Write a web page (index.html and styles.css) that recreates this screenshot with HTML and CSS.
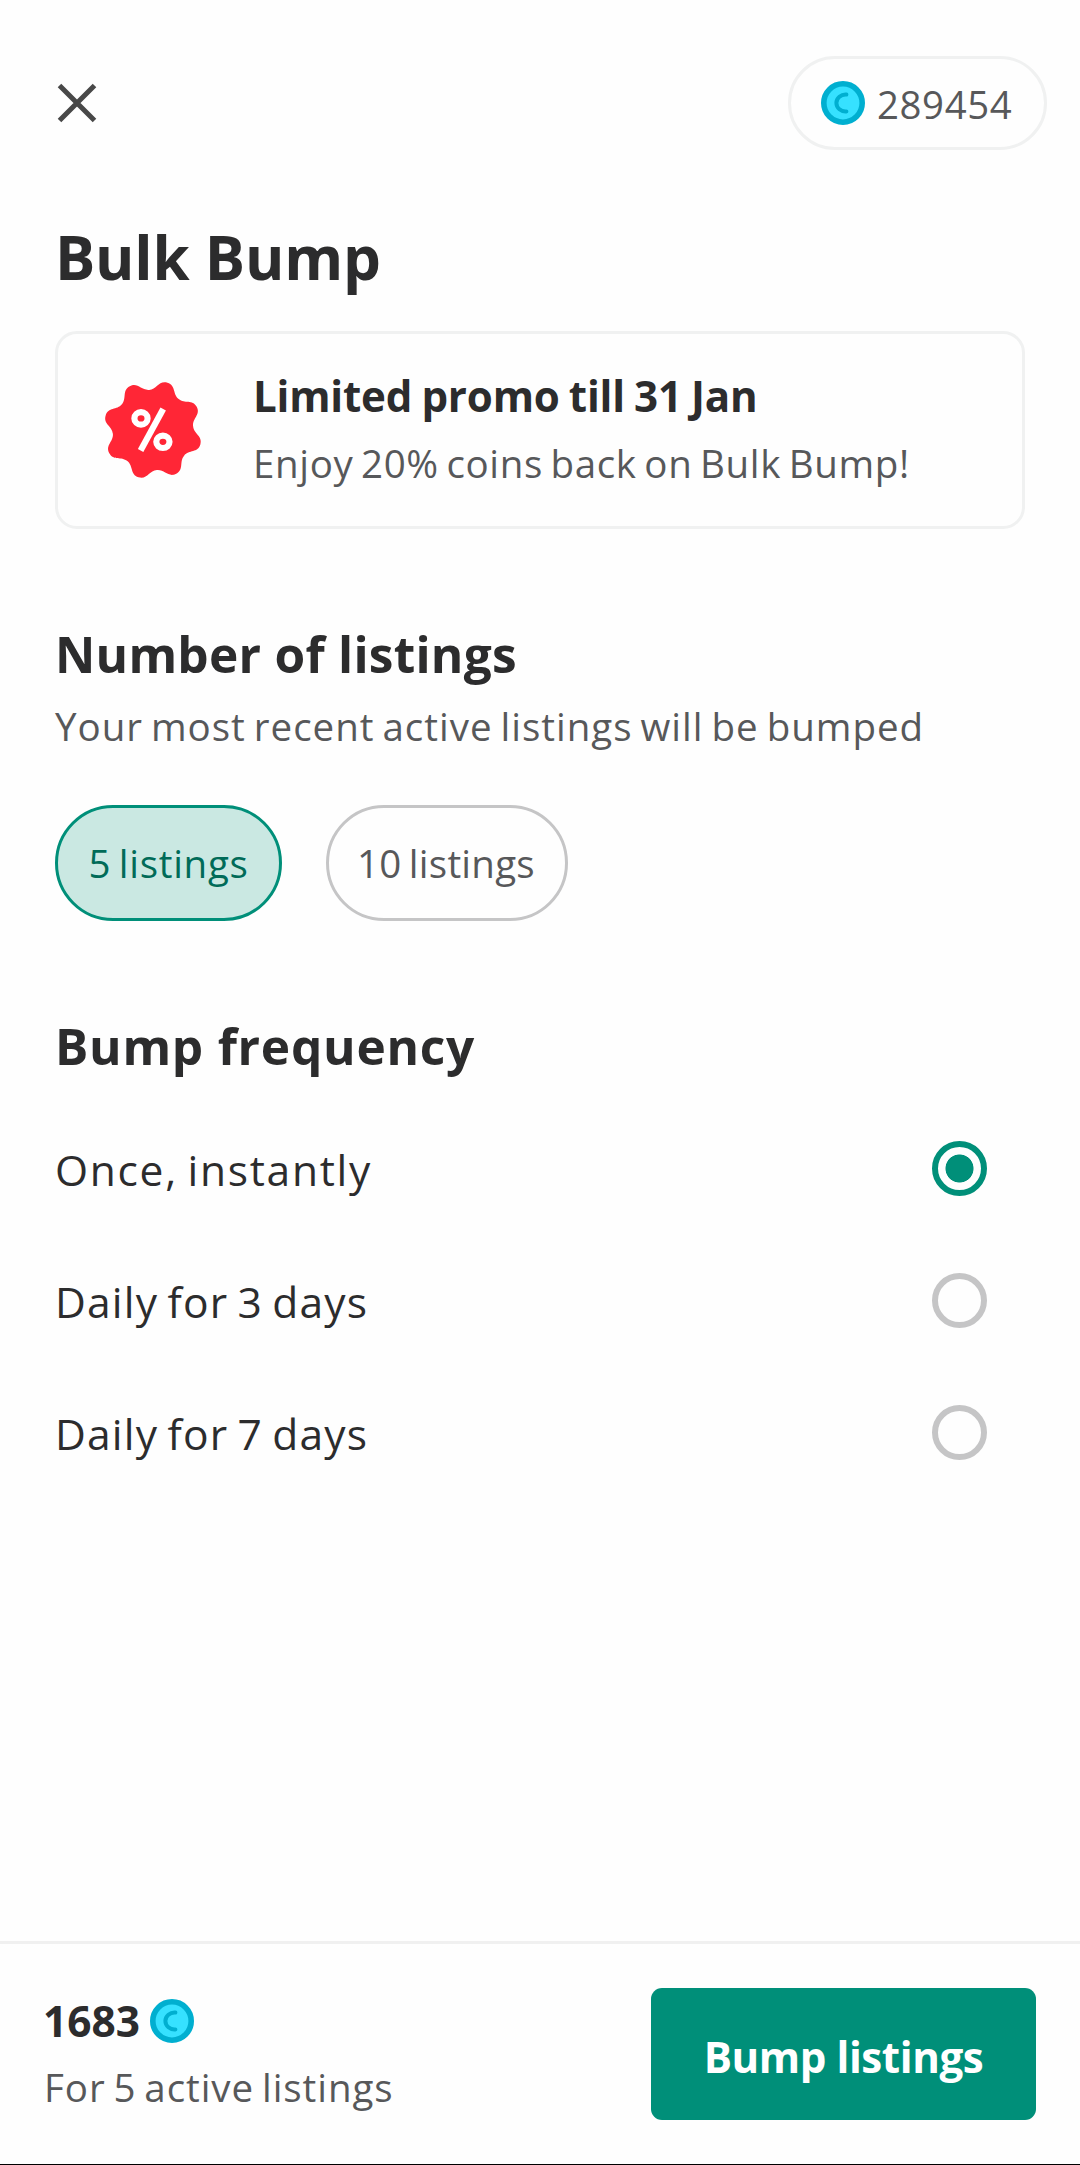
FILE: index.html
```
<!DOCTYPE html>
<html lang="en">
<head>
    <meta charset="UTF-8">
    <meta name="viewport" content="width=device-width, initial-scale=1.0">
    <title>Bulk Bump</title>

    <link rel="stylesheet" href="styles.css">
</head>
<body>
    <header class="header">
        <button class="close" aria-label="Close">
            <svg width="40" height="40" viewBox="0 0 40 40"><path d="M2.5 2.5l35 35M37.5 2.5l-35 35" fill="none" stroke="#484848" stroke-width="5"/></svg>
        </button>
        <div class="balance">
            <svg class="coin" viewBox="0 0 44 44"><circle cx="22" cy="22" r="19.2" fill="#36e1ff" stroke="#00afd0" stroke-width="5.6"/><path d="M25.4 13.6C20 13.2 15.4 17 15.4 22s4.6 8.8 10 8.4" fill="none" stroke="#00afd0" stroke-width="4" stroke-linecap="round"/></svg>
            <span>289454</span>
        </div>
    </header>

    <main class="content">
        <h1 class="title">Bulk Bump</h1>

        <div class="promo">
            <svg class="badge" viewBox="-50 -50 100 100">
                <path fill="#ff2636" d="M-3.86-40.11C4.1-40.88 5.86-49.97 14.47-47.34C23.08-44.71 19.46-36.19 25.63-31.1C31.8-26.01 39.47-31.19 43.7-23.24C47.93-15.29 39.34-11.82 40.11-3.86C40.88 4.1 49.97 5.86 47.34 14.47C44.71 23.08 36.19 19.46 31.1 25.63C26.01 31.8 31.19 39.47 23.24 43.7C15.29 47.93 11.82 39.34 3.86 40.11C-4.1 40.88-5.86 49.97-14.47 47.34C-23.08 44.71-19.46 36.19-25.63 31.1C-31.8 26.01-39.47 31.19-43.7 23.24C-47.93 15.29-39.34 11.82-40.11 3.86C-40.88-4.1-49.97-5.86-47.34-14.47C-44.71-23.08-36.19-19.46-31.1-25.63C-26.01-31.8-31.19-39.47-23.24-43.7C-15.29-47.93-11.82-39.34-3.86-40.11Z"/>
                <g fill="none" stroke="#fff" stroke-width="6.2">
                    <ellipse cx="-12" cy="-11.6" rx="6.6" ry="6.2"/>
                    <ellipse cx="9.9" cy="11.8" rx="6.6" ry="6.2"/>
                    <path d="M10.2-21L-12.4 20.6"/>
                </g>
            </svg>
            <div>
                <h2 class="promo-title">Limited promo till 31 Jan</h2>
                <p class="promo-text">Enjoy 20% coins back on Bulk Bump!</p>
            </div>
        </div>

        <h2 class="heading listings-heading">Number of listings</h2>
        <p class="hint">Your most recent active listings will be bumped</p>
        <div class="chips">
            <button class="chip chip-five active">5 listings</button>
            <button class="chip chip-ten">10 listings</button>
        </div>

        <h2 class="heading frequency-heading">Bump frequency</h2>
        <label class="option"><span class="once">Once, instantly</span><input type="radio" name="frequency" checked></label>
        <label class="option"><span>Daily for 3 days</span><input type="radio" name="frequency"></label>
        <label class="option"><span>Daily for 7 days</span><input type="radio" name="frequency"></label>
    </main>

    <footer class="footer">
        <div>
            <div class="price">
                <span>1683</span>
                <svg class="coin" viewBox="0 0 44 44"><circle cx="22" cy="22" r="19.2" fill="#36e1ff" stroke="#00afd0" stroke-width="5.6"/><path d="M25.4 13.6C20 13.2 15.4 17 15.4 22s4.6 8.8 10 8.4" fill="none" stroke="#00afd0" stroke-width="4" stroke-linecap="round"/></svg>
            </div>
            <p class="summary">For 5 active listings</p>
        </div>
        <button class="bump">Bump listings</button>
    </footer>
</body>
</html>
```
FILE: styles.css
```
* {
    box-sizing: border-box;
}
body {
    margin: 0;
    height: 2165px;
    display: flex;
    flex-direction: column;
    font-family: "Open Sans", sans-serif;
    color: #2c2c2d;
    background: #fefefe;
}
h1, h2, p {
    margin: 0;
    white-space: nowrap;
}
button {
    font-family: inherit;
    padding: 0;
    border: none;
    background: none;
    white-space: nowrap;
}
svg {
    display: block;
    flex: none;
}
.header {
    display: flex;
    justify-content: space-between;
    align-items: center;
    padding: 56px 33px 0 57px;
}
.balance {
    display: flex;
    align-items: center;
    gap: 12px;
    width: 259px;
    height: 94px;
    padding-left: 30px;
    border: 3px solid #f0f1f1;
    border-radius: 47px;
    font-size: 38.4px;
    letter-spacing: 0.6px;
    color: #57585a;
}
.balance span {
    padding-top: 1px;
}
.coin {
    width: 44px;
    height: 44px;
}
.content {
    flex: 1;
    padding: 0 55px;
}
.title {
    margin-top: 67px;
    font-size: 60px;
    line-height: 80px;
    letter-spacing: -0.2px;
}
.promo {
    display: flex;
    align-items: flex-start;
    gap: 50px;
    height: 198px;
    margin-top: 34px;
    padding: 32px 0 0 45px;
    border: 3px solid #f0f1f1;
    border-radius: 22px;
}
.badge {
    width: 100px;
    height: 100px;
    margin-top: 14px;
}
.promo-title {
    font-size: 42.1px;
    line-height: 60px;
    letter-spacing: -0.2px;
    word-spacing: -1.5px;
}
.promo-text, .hint, .summary {
    font-size: 38.5px;
    line-height: 50px;
    letter-spacing: 0.64px;
    word-spacing: -3px;
    color: #57585a;
}
.promo-text {
    margin-top: 12px;
}
.heading {
    font-size: 49.6px;
    line-height: 66px;
    letter-spacing: 0.25px;
}
.listings-heading {
    margin-top: 92px;
}
.hint {
    margin-top: 14px;
    letter-spacing: 0.99px;
}
.chips {
    display: flex;
    gap: 44px;
    margin-top: 54px;
}
.chip {
    height: 116px;
    border: 3px solid #c5c5c6;
    border-radius: 58px;
    font-size: 38.5px;
    word-spacing: -3px;
    color: #57585a;
}
.chip-five {
    width: 227px;
    letter-spacing: 0.7px;
}
.chip-ten {
    width: 242px;
    padding-right: 2px;
    letter-spacing: 0.25px;
}
.chip.active {
    border-color: #008f79;
    background: #cae8e2;
    color: #006b58;
}
.frequency-heading {
    margin-top: 92px;
    margin-bottom: 23px;
    letter-spacing: 0.75px;
}
.option {
    display: flex;
    justify-content: space-between;
    align-items: center;
    height: 132px;
    padding-right: 38px;
    font-size: 42.5px;
    letter-spacing: 1.2px;
    word-spacing: -3px;
}
.option span {
    padding-top: 3px;
}
.option .once {
    letter-spacing: 1.7px;
}
.option input {
    appearance: none;
    width: 55px;
    height: 55px;
    margin: 0;
    border: 6px solid #c5c5c6;
    border-radius: 50%;
}
.option input:checked {
    border-color: #008f79;
    background: radial-gradient(circle, #008f79 13.6px, transparent 14.4px);
}
.footer {
    display: flex;
    justify-content: space-between;
    align-items: flex-start;
    height: 224px;
    padding: 44px 44px 0 43px;
    border-top: 3px solid #f0f0f0;
    border-bottom: 1px solid #000;
}
.price {
    display: flex;
    align-items: center;
    gap: 10px;
    margin-top: 1px;
    font-size: 42.4px;
    font-weight: 700;
    line-height: 60px;
}
.price span {
    padding-top: 2px;
}
.price .coin {
    margin-top: 1px;
}
.summary {
    margin-top: 11px;
    padding-left: 1px;
    letter-spacing: 0.93px;
}
.bump {
    width: 385px;
    height: 132px;
    padding-top: 4px;
    border-radius: 11px;
    background: #008f79;
    color: #fff;
    font-size: 42.1px;
    font-weight: 700;
    letter-spacing: -0.41px;
}
```
